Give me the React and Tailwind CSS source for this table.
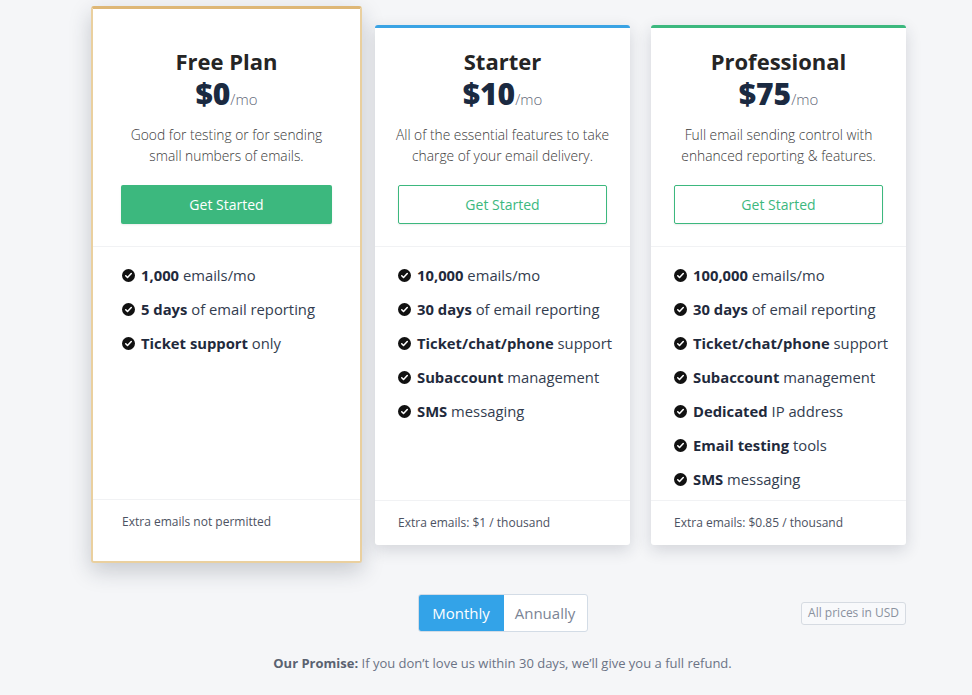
import React from "react";

const plans = [
  {
    name: "Free Plan",
    price: "$0",
    desc: ["Good for testing or for sending", "small numbers of emails."],
    featured: true,
    features: [
      ["1,000", " emails/mo"],
      ["5 days", " of email reporting"],
      ["Ticket support", " only"],
    ],
    footer: "Extra emails not permitted",
  },
  {
    name: "Starter",
    price: "$10",
    desc: ["All of the essential features to take", "charge of your email delivery."],
    top: "border-t-[#3aa3e4]",
    features: [
      ["10,000", " emails/mo"],
      ["30 days", " of email reporting"],
      ["Ticket/chat/phone", " support"],
      ["Subaccount", " management"],
      ["SMS", " messaging"],
    ],
    footer: "Extra emails: $1 / thousand",
  },
  {
    name: "Professional",
    price: "$75",
    desc: ["Full email sending control with", "enhanced reporting & features."],
    top: "border-t-[#3cb87e]",
    features: [
      ["100,000", " emails/mo"],
      ["30 days", " of email reporting"],
      ["Ticket/chat/phone", " support"],
      ["Subaccount", " management"],
      ["Dedicated", " IP address"],
      ["Email testing", " tools"],
      ["SMS", " messaging"],
    ],
    footer: "Extra emails: $0.85 / thousand",
  },
];

const CheckIcon = () => (
  <svg width="13" height="13" viewBox="0 0 16 16" className="shrink-0">
    <circle cx="8" cy="8" r="8" fill="#111" />
    <path
      d="M4.6 8.3l2.2 2.2 4.6-4.9"
      fill="none"
      stroke="#fff"
      strokeWidth="1.9"
      strokeLinecap="round"
      strokeLinejoin="round"
    />
  </svg>
);

const PlanCard = ({ plan }) => {
  const featured = plan.featured;
  return (
    <div
      className={`bg-white rounded-[3px] flex flex-col ${
        featured
          ? "-mx-2 -mt-[19px] -mb-[18px] border-2 border-t-[3px] border-[#ead09f] border-t-[#deb776] shadow-[0_8px_22px_rgba(30,40,60,0.22)]"
          : `border-t-[3px] ${plan.top} shadow-[0_5px_16px_rgba(30,40,60,0.16)]`
      }`}
    >
      {/* header */}
      <div
        className={`flex flex-col items-center text-center border-b border-[#f1f2f4] pb-[22px] ${
          featured ? "px-[28px] pt-[37px]" : "px-[23px] pt-[18px]"
        }`}
      >
        <h2 className="text-[22px] leading-[30px] font-bold text-[#252525]">
          {plan.name}
        </h2>
        <div className="leading-[36px]">
          <span className="text-[30px] font-extrabold text-[#1b2a41]">
            {plan.price}
          </span>
          <span className="text-[15px] font-light text-[#5f6778]">/mo</span>
        </div>
        <p className="mt-[7px] text-[13.8px] leading-[21px] font-light text-[#3a3a3a] whitespace-nowrap">
          {plan.desc[0]}
          <br />
          {plan.desc[1]}
        </p>
        <button
          className={`mt-[19px] w-full h-[39px] rounded-[2px] text-[14px] shadow-[0_1px_2px_rgba(0,0,0,0.08)] ${
            featured
              ? "bg-[#3cb87e] text-white"
              : "bg-white border border-[#3cb87e] text-[#3cb87e]"
          }`}
        >
          Get Started
        </button>
      </div>

      {/* features */}
      <ul
        className={`flex-1 pt-[18px] pb-[11px] flex flex-col gap-[14px] ${
          featured ? "px-[29px]" : "px-[23px]"
        }`}
      >
        {plan.features.map(([b, rest], i) => (
          <li
            key={i}
            className="flex items-center gap-[6px] h-[20px] text-[14.8px] text-[#333d4f] whitespace-nowrap"
          >
            <CheckIcon />
            <span>
              <strong className="font-bold text-[#1f2a3c]">{b}</strong>
              {rest}
            </span>
          </li>
        ))}
      </ul>

      {/* footer */}
      <div
        className={`border-t border-[#f1f2f4] text-[12px] leading-[18px] text-[#4c5262] ${
          featured ? "px-[29px] pt-[13px] pb-[30px]" : "px-[23px] py-[13px]"
        }`}
      >
        {plan.footer}
      </div>
    </div>
  );
};

const App = () => {
  return (
    <div
      className="min-h-screen bg-[#f5f6f8] overflow-hidden"
      style={{ fontFamily: '"Open Sans", sans-serif' }}
    >
      <div className="ml-[99px] w-[807px] pt-[25px]">
        <div className="grid grid-cols-3 gap-[21px] items-stretch">
          {plans.map((p) => (
            <PlanCard key={p.name} plan={p} />
          ))}
        </div>

        {/* billing toggle */}
        <div className="mt-[49px] grid grid-cols-3 items-center">
          <div />
          <div className="flex justify-center">
            <div className="flex h-[38px] rounded-[3px] border border-[#d3dce6] overflow-hidden bg-white text-[15px]">
              <button className="w-[85px] bg-[#33a3e8] text-white">Monthly</button>
              <button className="w-[83px] text-[#7b8495]">Annually</button>
            </div>
          </div>
          <div className="flex justify-end">
            <span className="h-[23px] px-[6px] flex items-center rounded-[3px] border border-[#d6dbe2] bg-[#f8f9fb] text-[12px] text-[#8a919e]">
              All prices in USD
            </span>
          </div>
        </div>

        <p className="mt-[21px] text-center text-[13px] leading-[20px] text-[#6b7385]">
          <strong className="font-bold text-[#5a6270]">Our Promise:</strong> If
          you don’t love us within 30 days, we’ll give you a full refund.
        </p>
      </div>
    </div>
  );
};

export default App;
